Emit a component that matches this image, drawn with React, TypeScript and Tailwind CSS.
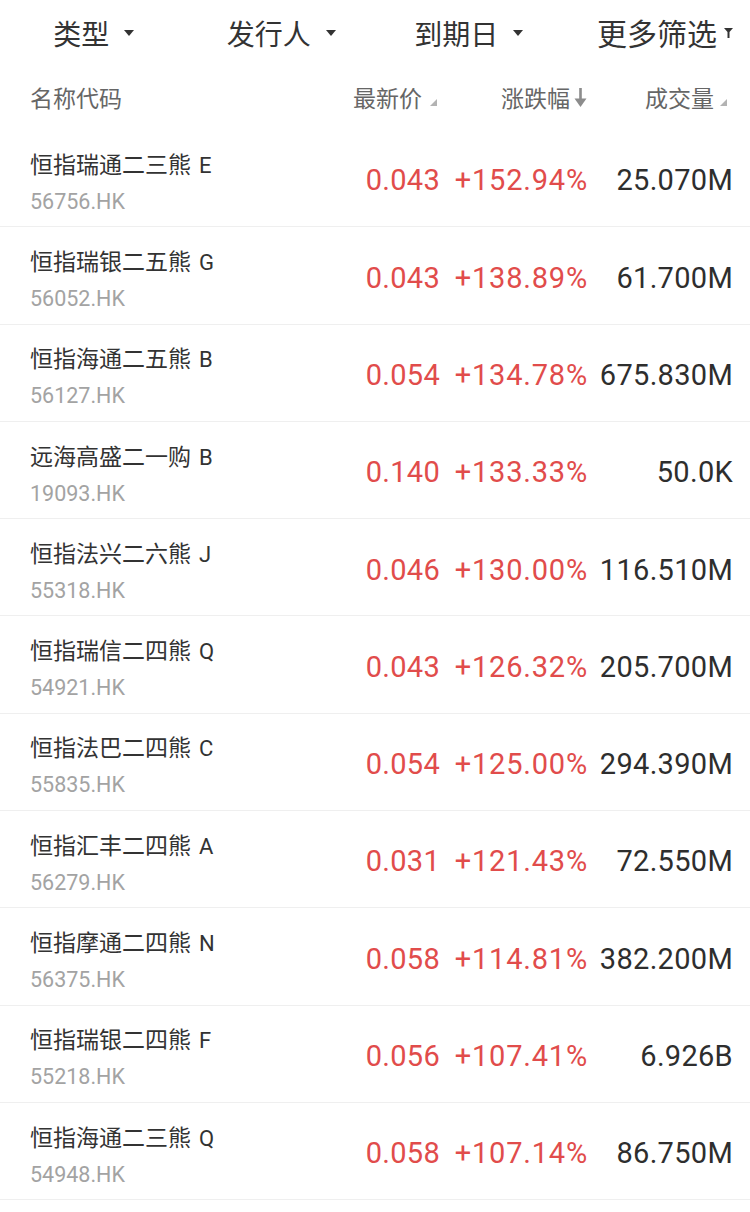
import React from 'react';

type Row = {
  name: string;
  code: string;
  price: string;
  change: string;
  volume: string;
};

const ROWS: Row[] = [
  { name: '恒指瑞通二三熊E', code: '56756.HK', price: '0.043', change: '+152.94%', volume: '25.070M' },
  { name: '恒指瑞银二五熊G', code: '56052.HK', price: '0.043', change: '+138.89%', volume: '61.700M' },
  { name: '恒指海通二五熊B', code: '56127.HK', price: '0.054', change: '+134.78%', volume: '675.830M' },
  { name: '远海高盛二一购B', code: '19093.HK', price: '0.140', change: '+133.33%', volume: '50.0K' },
  { name: '恒指法兴二六熊J', code: '55318.HK', price: '0.046', change: '+130.00%', volume: '116.510M' },
  { name: '恒指瑞信二四熊Q', code: '54921.HK', price: '0.043', change: '+126.32%', volume: '205.700M' },
  { name: '恒指法巴二四熊C', code: '55835.HK', price: '0.054', change: '+125.00%', volume: '294.390M' },
  { name: '恒指汇丰二四熊A', code: '56279.HK', price: '0.031', change: '+121.43%', volume: '72.550M' },
  { name: '恒指摩通二四熊N', code: '56375.HK', price: '0.058', change: '+114.81%', volume: '382.200M' },
  { name: '恒指瑞银二四熊F', code: '55218.HK', price: '0.056', change: '+107.41%', volume: '6.926B' },
  { name: '恒指海通二三熊Q', code: '54948.HK', price: '0.058', change: '+107.14%', volume: '86.750M' },
];

const CJK = "font-['Noto_Sans_CJK_SC',sans-serif]";
const NUM = "font-['Roboto','Noto_Sans_CJK_SC',sans-serif]";

function Caret() {
  return (
    <svg width="10" height="6" viewBox="0 0 10 6" className="shrink-0">
      <polygon points="0,0 10,0 5,6" fill="#333" />
    </svg>
  );
}

function Funnel() {
  return (
    <svg width="9" height="10" viewBox="0 0 9 10" className="shrink-0">
      <polygon points="0,0 9,0 5.5,4 5.5,10 3.5,10 3.5,4" fill="#333" />
    </svg>
  );
}

function SortCorner() {
  return (
    <svg width="7" height="7" viewBox="0 0 7 7" className="shrink-0 mt-[10px]">
      <polygon points="7,0 7,7 0,7" fill="#b3b3b3" />
    </svg>
  );
}

function DownArrow() {
  return (
    <svg width="13" height="19" viewBox="0 0 13 19" className="shrink-0">
      <rect x="5.2" y="0" width="2.6" height="12" fill="#8c8c8c" />
      <polygon points="0.5,10.5 12.5,10.5 6.5,19" fill="#8c8c8c" />
    </svg>
  );
}

function FilterItem({ label, icon }: { label: string; icon: React.ReactNode }) {
  return (
    <div className="flex items-center justify-center gap-[15px]">
      <span className="text-[28px] text-[#333]">{label}</span>
      {icon}
    </div>
  );
}

function Name({ text }: { text: string }) {
  // trailing latin letter sits a little apart from the chinese part
  const head = text.slice(0, -1);
  const tail = text.slice(-1);
  return (
    <span className="text-[23px] leading-[36px] text-[#333]">
      {head}
      <span className={`${NUM} ml-[8px] text-[22px]`}>{tail}</span>
    </span>
  );
}

export default function App() {
  return (
    <div className={`w-[750px] min-h-[1212px] bg-white ${CJK}`}>
      {/* Filter bar */}
      <div className="grid grid-cols-4 h-[65px] items-center">
        <FilterItem label="类型" icon={<Caret />} />
        <FilterItem label="发行人" icon={<Caret />} />
        <FilterItem label="到期日" icon={<Caret />} />
        <div className="flex items-center justify-end pr-[17px] gap-[7px]">
          <span className="text-[30px] text-[#333]">更多筛选</span>
          <Funnel />
        </div>
      </div>

      {/* Column header */}
      <div className="flex h-[65px] items-center text-[23px] text-[#666]">
        <div className="flex-1 pl-[30px]">名称代码</div>
        <div className="w-[90px] flex items-center justify-end gap-[8px]">
          <span>最新价</span>
          <SortCorner />
        </div>
        <div className="w-[150px] flex items-center justify-end gap-[4px]">
          <span>涨跌幅</span>
          <DownArrow />
        </div>
        <div className="w-[140px] flex items-center justify-end gap-[6px]">
          <span>成交量</span>
          <SortCorner />
        </div>
        <div className="w-[23px]" />
      </div>

      {/* Rows */}
      {ROWS.map((r) => (
        <div key={r.code} className="flex items-center h-[97.3px] pt-[6px] border-b border-[#efefef]">
          <div className="flex-1 pl-[30px] pt-[2px] flex flex-col">
            <Name text={r.name} />
            <span className={`${NUM} text-[21.5px] leading-[36px] text-[#a3a3a3]`}>{r.code}</span>
          </div>
          <div className={`${NUM} w-[90px] text-right text-[29px] tracking-[0.3px] text-[#e14c4b]`}>{r.price}</div>
          <div className={`${NUM} w-[148px] text-right text-[29px] tracking-[0.8px] text-[#e14c4b]`}>
            {r.change}
          </div>
          <div className={`${NUM} w-[145px] text-right text-[29px] tracking-[0.3px] text-[#2e2e2e]`}>{r.volume}</div>
          <div className="w-[17px]" />
        </div>
      ))}
    </div>
  );
}
